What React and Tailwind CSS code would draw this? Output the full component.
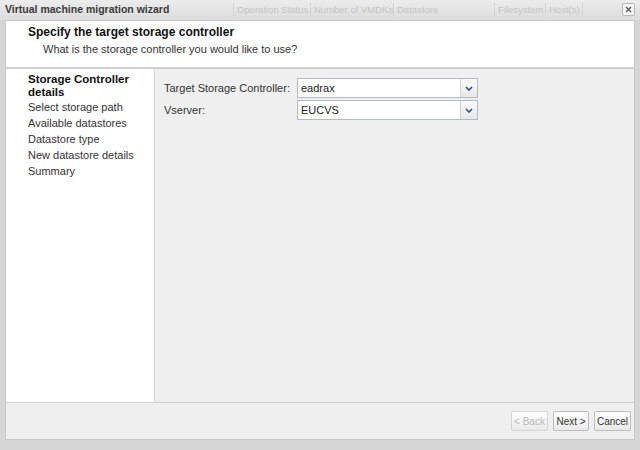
import React from 'react';

const font = { fontFamily: '"Liberation Sans", Arial, sans-serif' };

function Select({ value }) {
    return (
        <div className="flex h-[20px] w-[181px] border border-[#b5b8c8] bg-white">
            <div className="flex-1 flex items-center pl-[3px] text-[11px] text-[#222]">{value}</div>
            <div className="w-[17px] flex items-center justify-center border-l border-[#d0d0d0] bg-gradient-to-b from-[#fafafa] to-[#e8e8e8]">
                <svg width="8" height="5" viewBox="0 0 8 5">
                    <path d="M1 1 L4 4 L7 1" stroke="#2a4f8a" strokeWidth="1.6" fill="none" />
                </svg>
            </div>
        </div>
    );
}

function Button({ children, disabled, w }) {
    return (
        <div className={`h-[20px] flex items-center justify-center border rounded-[2px] text-[10px] bg-gradient-to-b from-white to-[#e9e9e9] ${w} ${disabled ? 'border-[#d4d4d4] text-[#b8b8b8]' : 'border-[#bdbdbd] text-[#333]'}`}>
            {children}
        </div>
    );
}

export default function App() {
    const steps = ['Select storage path', 'Available datastores', 'Datastore type', 'New datastore details', 'Summary'];

    return (
        <div style={font} className="w-[640px] h-[450px] bg-[#d6d6d6] flex flex-col overflow-hidden">
            {/* title bar */}
            <div className="h-[20px] flex items-center bg-gradient-to-b from-[#ececec] to-[#dcdcdc] relative whitespace-nowrap">
                <div className="pl-[5px] text-[10.5px] font-bold text-[#3a3a3a] w-[233px]">Virtual machine migration wizard</div>
                <div className="flex text-[9.5px] text-[#c4c4c4] h-full items-center">
                    <span className="w-[77px] pl-[3px] border-l border-[#d2d2d2] overflow-hidden">Operation Status</span>
                    <span className="w-[83px] pl-[3px] border-l border-[#d2d2d2] overflow-hidden">Number of VMDKs</span>
                    <span className="w-[101px] pl-[3px] border-l border-[#d2d2d2]">Datastore</span>
                    <span className="w-[51px] pl-[3px] border-l border-[#d2d2d2] overflow-hidden">Filesystem</span>
                    <span className="pl-[3px] border-l border-r border-[#d2d2d2] pr-[2px]">Host(s)</span>
                </div>
                <div className="absolute right-[5px] top-[3px] w-[13px] h-[13px] border border-[#b8b8b8] bg-[#f4f4f4] rounded-[2px] flex items-center justify-center">
                    <svg width="7" height="7" viewBox="0 0 7 7">
                        <path d="M1 1 L6 6 M6 1 L1 6" stroke="#555" strokeWidth="1.3" />
                    </svg>
                </div>
            </div>

            <div className="flex-1 flex flex-col mx-[5px] mb-[10px] border border-[#c8c8c8]">
                {/* header */}
                <div className="h-[48px] bg-white border-b-2 border-[#d0d0d0] pl-[22px] pt-[3px]">
                    <div className="text-[12px] font-bold text-[#111] leading-[16px]">Specify the target storage controller</div>
                    <div className="text-[11px] text-[#333] pl-[15px] mt-[1px] leading-[16px]">What is the storage controller you would like to use?</div>
                </div>

                {/* body */}
                <div className="flex-1 flex border-b border-[#d0d0d0]">
                    <div className="w-[149px] bg-white border-r border-[#d4d4d4] pl-[22px] pt-[4px] text-[11px] text-[#333] leading-[16px]">
                        <div className="font-bold text-[#111] text-[11.5px] leading-[13px]">Storage Controller<br />details</div>
                        {steps.map((s) => (
                            <div key={s}>{s}</div>
                        ))}
                    </div>
                    <div className="flex-1 bg-[#efefef] pl-[9px] pt-[9px] flex flex-col gap-[2px]">
                        <div className="flex items-center">
                            <div className="w-[133px] text-[11px] text-[#333]">Target Storage Controller:</div>
                            <Select value="eadrax" />
                        </div>
                        <div className="flex items-center">
                            <div className="w-[133px] text-[11px] text-[#333]">Vserver:</div>
                            <Select value="EUCVS" />
                        </div>
                    </div>
                </div>

                {/* footer */}
                <div className="h-[36px] bg-[#efefef] flex items-center justify-end gap-[5px] pr-[3px]">
                    <Button disabled w="w-[37px]">&lt; Back</Button>
                    <Button w="w-[36px]">Next &gt;</Button>
                    <Button w="w-[37px]">Cancel</Button>
                </div>
            </div>
        </div>
    );
}
